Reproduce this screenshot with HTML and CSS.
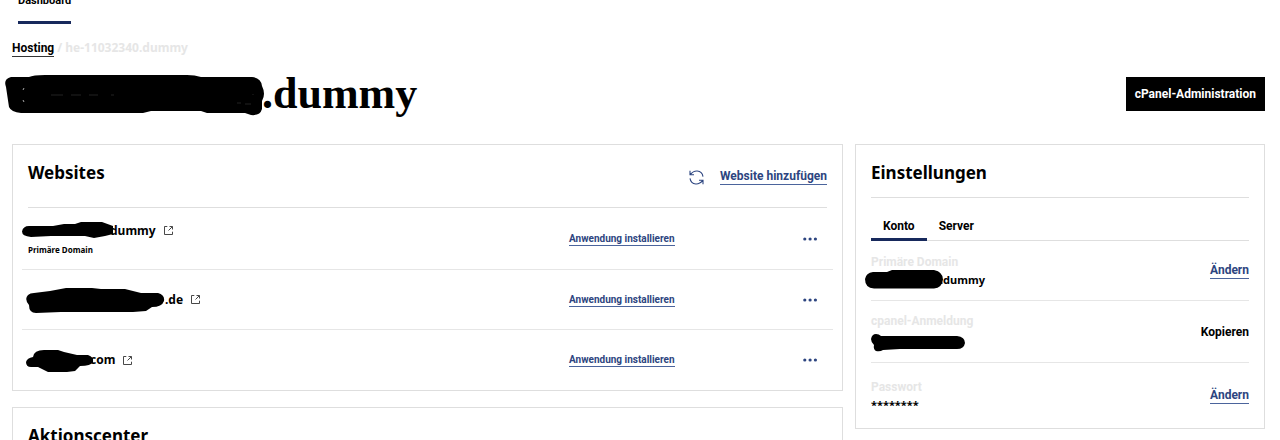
FILE: index.html
```
<!DOCTYPE html>
<html lang="de">
<head>
<meta charset="utf-8">
<meta name="viewport" content="width=device-width, initial-scale=1">
<title>Hosting – Dashboard</title>
<link rel="stylesheet" href="styles.css">
</head>
<body>
<svg class="defs" aria-hidden="true">
  <symbol id="external" viewBox="0 0 9 9"><path d="M3.300 .5H.5v8h8V5.700M5.500 .5h3v3M8.200 .8 4.500 4.500" fill="none" stroke="currentColor" stroke-width=".9"/></symbol>
  <symbol id="dots" viewBox="0 0 14 4"><g fill="currentColor"><circle cx="1.800" cy="2" r="1.600"/><circle cx="7.100" cy="2" r="1.600"/><circle cx="12.400" cy="2" r="1.600"/></g></symbol>
</svg>
<nav class="topnav"><a href="#dashboard">Dashboard</a></nav>
<nav class="crumbs"><a href="#hosting">Hosting</a><span>/</span><span>he-11032340.dummy</span></nav>
<header class="head">
  <h1><svg class="mask-title" viewBox="0 0 260 43" aria-hidden="true"><path d="M6 4 24 4Q28 2 40 2H182Q190 2 196 4H247Q256 5 257 13Q261 21 257 28V36Q255 43 246 42L240 40H202L196 38H146L138 40H16Q6 39 4 34L1 14Q-2 6 6 4Z"/><path d="M19 15l-1 2M18 27l1 2" fill="none" stroke="#aaa"/><path d="M46 22h12M66 22h10M84 22h9M106 22h3M232 30h4M240 31h6M248 21v1" fill="none" stroke="#222"/></svg>.dummy</h1>
  <button class="primary" type="button">cPanel-Administration</button>
</header>
<main class="columns">
  <div class="stack">
    <section class="panel">
      <div class="panel-head">
        <h2>Websites</h2>
        <div class="actions">
          <button class="icon" type="button" aria-label="Aktualisieren"><svg width="15" height="15" viewBox="0 0 15 15" fill="none" stroke="currentColor" stroke-width="1.100"><path d="M1 .8v4h4M1.200 4.600Q4.200 .8 8.200 1Q13.200 1.400 14 6.600M14 14.200v-4h-4M13.800 10.400Q10.800 14.200 6.800 14Q1.800 13.600 1 8.400"/></svg></button>
          <a class="link" href="#add">Website hinzufügen</a>
        </div>
      </div>
      <ul class="sites">
        <li>
          <div class="primary-site">
            <div class="site"><svg class="mask-a" viewBox="0 0 92 17" aria-hidden="true"><path d="M7 4H31L42 2H53L59 0H80L91 4V12L83 14 72 16 63 14H29L9 15Q0 14 0 9.500Q1 4 7 4Z"/></svg>dummy<a class="ext" href="#site1" aria-label="Website öffnen"><svg width="9" height="9"><use href="#external"/></svg></a></div>
            <div class="note">Primäre Domain</div>
          </div>
          <div class="ops"><a class="link small" href="#app1">Anwendung installieren</a><button class="icon" type="button" aria-label="Mehr"><svg width="14" height="4"><use href="#dots"/></svg></button></div>
        </li>
        <li>
          <div class="site"><svg class="mask-b" viewBox="0 0 139 26" aria-hidden="true"><path d="M8 6 24 4 40 1H66L75 2H99L115 6H132Q139 8 138 14Q136 20 126 20L120 24 107 25H35L10 26Q3 26 3 18Q-2 12 2 8Q4 6 8 6Z"/></svg>.de<a class="ext" href="#site2" aria-label="Website öffnen"><svg width="9" height="9"><use href="#external"/></svg></a></div>
          <div class="ops"><a class="link small" href="#app2">Anwendung installieren</a><button class="icon" type="button" aria-label="Mehr"><svg width="14" height="4"><use href="#dots"/></svg></button></div>
        </li>
        <li>
          <div class="site"><svg class="mask-c" viewBox="0 0 68 23" aria-hidden="true"><path d="M7 8Q8 1 18 1H32L38 3 51 6H62Q68 8 67 13Q65 17 54 17L49 22 41 23H22L12 18H5Q0 18 0 13Q1 9 7 8Z"/></svg>com<a class="ext" href="#site3" aria-label="Website öffnen"><svg width="9" height="9"><use href="#external"/></svg></a></div>
          <div class="ops"><a class="link small" href="#app3">Anwendung installieren</a><button class="icon" type="button" aria-label="Mehr"><svg width="14" height="4"><use href="#dots"/></svg></button></div>
        </li>
      </ul>
    </section>
    <section class="panel"><div class="panel-head"><h2>Aktionscenter</h2></div></section>
  </div>
  <aside class="panel settings">
    <h2>Einstellungen</h2>
    <div class="tabs" role="tablist"><button type="button" role="tab" aria-selected="true">Konto</button><button type="button" role="tab" aria-selected="false">Server</button></div>
    <dl class="items">
      <div class="item"><div><dt>Primäre Domain</dt><dd><svg class="mask-d" viewBox="0 0 78 19" aria-hidden="true"><path d="M8 2H22L27 0H69Q78 2 78 9.500Q77 18 69 18.500H9Q0 18 0 9Q1 3 8 2Z"/></svg>.dummy</dd></div><a class="link" href="#domain">Ändern</a></div>
      <div class="item"><div><dt>cpanel-Anmeldung</dt><dd class="login"><svg class="mask-e" viewBox="0 0 94 18" aria-hidden="true"><path d="M5 0Q8 0 10 2H86Q94 3 94 9Q93 15 86 15H29L12 16Q9 18 5 17 2 15 3 11Q0 8 0 5 1 0 5 0Z"/></svg></dd></div><button class="copy" type="button">Kopieren</button></div>
      <div class="item"><div><dt>Passwort</dt><dd>********</dd></div><a class="link" href="#password">Ändern</a></div>
    </dl>
  </aside>
</main>
</body>
</html>
```
FILE: styles.css
```
* { box-sizing: border-box; }
body {
  margin: 0;
  padding: 0 15px 0 12px;
  background: #fff;
  color: #000;
  font: 700 12px/16px Roboto, "Noto Sans", sans-serif;
  overflow: hidden;
}
h1, h2, ul, dl, dd { margin: 0; padding: 0; }
button { font: inherit; color: inherit; border: 0; background: none; padding: 0; cursor: pointer; }
a { color: inherit; text-decoration: none; }
svg { display: block; flex: none; }
.defs { position: absolute; width: 0; height: 0; }

.topnav { display: flex; padding-left: 6px; margin-top: -7px; }
.topnav a { padding-bottom: 12px; border-bottom: 3px solid #17295c; font-size: 11px; }
.crumbs { display: flex; gap: 3px; margin-top: 16px; color: #e6e6e6; font-family: "Noto Sans", sans-serif; }
.crumbs a { color: #000; border-bottom: 1px solid #333; font-family: Roboto, sans-serif; }

.head { display: flex; justify-content: space-between; align-items: center; margin-top: 14px; }
h1 { display: flex; align-items: center; font: 700 44px/46px "Liberation Serif", serif; }
.mask-title { width: 260px; height: 43px; margin-left: -7px; margin-right: -3px; }
.primary { height: 34px; padding: 0 9px; background: #000; color: #fff; }

.columns { display: grid; grid-template-columns: 831fr 410fr; gap: 12px; align-items: start; margin-top: 27px; }
.stack { display: grid; gap: 16px; }
.panel { border: 1px solid #dedede; padding: 0 15px; }
h2 { font: 700 17px/24px "Noto Sans", sans-serif; }
.panel-head { display: flex; justify-content: space-between; height: 63px; padding-top: 16px; border-bottom: 1px solid #dedede; }
.actions { display: flex; align-items: center; gap: 16px; height: 32px; color: #2d4580; }
.link { color: #2d4580; border-bottom: 1px solid #4b649c; line-height: 15px; }
.small { font-size: 10px; line-height: 13px; }

.sites { list-style: none; margin: 0 -6px; }
.sites li { display: grid; grid-template-columns: 541fr 258fr; align-items: center; min-height: 60px; padding: 0 6px; border-bottom: 1px solid #e6e6e6; }
.sites li:first-child { min-height: 62px; }
.sites li:last-child { border: 0; }
.site { display: flex; align-items: center; height: 26px; font-family: "Noto Sans", sans-serif; }
.primary-site { padding-bottom: 4px; }
.note { font: 700 8px/12px "Noto Sans", sans-serif; }
.ext { margin-left: 8px; color: #333; }
.ops { display: flex; align-items: center; justify-content: space-between; padding-right: 10px; color: #2d4580; }
.mask-a { width: 92px; height: 17px; margin: 0 -4px 0 -6px; }
.mask-b { width: 139px; height: 26px; margin-left: -2px; }
.mask-c { width: 68px; height: 23px; margin: 0 -4px 0 -2px; }

.settings h2 { padding: 16px 0 12px; border-bottom: 1px solid #dedede; }
.tabs { display: flex; margin-top: 12px; border-bottom: 1px solid #dedede; }
.tabs button { padding: 8px 12px 4px; margin-bottom: -1px; border-bottom: 3px solid transparent; }
.tabs button[aria-selected="true"] { border-color: #17295c; }
.item { display: flex; justify-content: space-between; align-items: center; height: 62px; border-bottom: 1px solid #e6e6e6; }
.item:first-child { height: 60px; }
.item:last-child { border: 0; height: 65px; }
dt { color: #e6e6e6; line-height: 18px; }
dd { display: flex; align-items: center; height: 18px; font: 700 11px/16px "Noto Sans", sans-serif; }
.login { height: 22px; align-items: end; }
.mask-d { width: 78px; height: 19px; margin: 0 -3px 0 -6px; }
.mask-e { width: 94px; height: 18px; }
```
